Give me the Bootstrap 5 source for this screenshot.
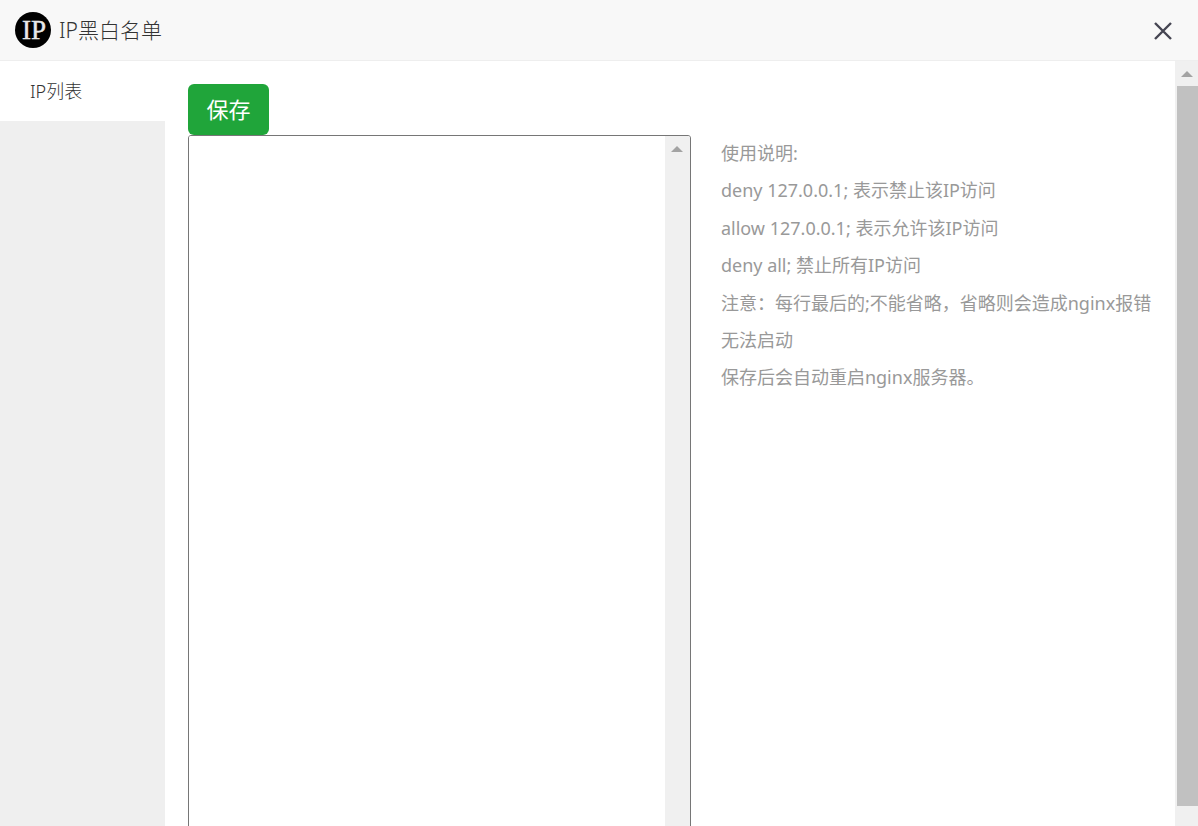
<!DOCTYPE html>
<html lang="zh-CN">
<head>
<meta charset="utf-8">
<meta name="viewport" content="width=device-width, initial-scale=1">
<title>IP黑白名单</title>
<link href="https://cdn.jsdelivr.net/npm/bootstrap@5.3.0/dist/css/bootstrap.min.css" rel="stylesheet">
<style>
  body { font-family: "Noto Sans", "Noto Sans CJK SC", sans-serif; font-size: 18px; color: #333; background: #fff; }
  .dialog-head { height: 61px; padding: 0 24px 0 15px; background: #f8f8f8; border-bottom: 1px solid #eee; }
  .dialog-title { font-size: 21px; line-height: 30px; font-weight: 300; }
  .close-btn { width: 22px; height: 24px; }
  .side { width: 165px; background: #efefef; }
  .side a { height: 60px; padding-left: 30px; color: #333; background: #fff; font-weight: 300; }
  .pane { padding: 23px 23px 0; min-width: 0; }
  .save-btn { min-width: 81px; height: 51px; padding: 0 0 2px; font-size: 22px; line-height: 30px; color: #fff; background: #20a53a; border: 0; border-radius: 6px; }
  .save-btn:hover { color: #fff; background: #1c8f32; }
  .editor-grid { display: grid; grid-template-columns: 7fr 6fr; column-gap: 30px; }
  .editor { border: 1px solid #767676; border-radius: 3px; overflow: hidden; height: 100vh; }
  .editor textarea { border: 0; resize: none; outline: 0; padding: 4px; scrollbar-width: none; }
  .bar { background: #f0f0f0; }
  .editor .bar { width: 25px; }
  .page-bar { width: 23px; padding-left: 2px; }
  .bar svg { display: block; width: 12px; height: 6px; fill: #a3a3a3; }
  .arrow { height: 25px; padding: 10px 6px 0; }
  .page-bar .arrow { padding: 10px 4px 0; }
  .thumb { height: 97.3%; background: #c1c1c1; }
  .track { min-height: 0; }
  .hints { color: #999; line-height: 37px; }
  .hints li:nth-child(even) { margin-bottom: 1px; }
</style>
</head>
<body class="vh-100 overflow-hidden d-flex flex-column">
  <header class="dialog-head d-flex align-items-center flex-shrink-0">
    <svg class="me-2" width="36" height="36" viewBox="0 0 36 36" aria-hidden="true">
      <circle cx="18" cy="18" r="18" fill="#000"/>
      <text x="19" y="27" text-anchor="middle" font-family="Liberation Serif, serif" font-size="27" fill="#e8e8e8" stroke="#e8e8e8" stroke-width=".4">IP</text>
    </svg>
    <h1 class="dialog-title mb-0">IP黑白名单</h1>
    <button type="button" class="close-btn btn p-0 border-0 ms-auto d-flex align-items-end justify-content-center" aria-label="关闭">
      <svg width="18" height="20" viewBox="0 0 18 20" fill="none" stroke="#454552" stroke-width="2.4"><path d="M1 1 17 17M17 1 1 17"/></svg>
    </button>
  </header>
  <div class="d-flex flex-grow-1 overflow-hidden">
    <nav class="side flex-shrink-0">
      <a href="#list" class="d-flex align-items-center text-decoration-none">IP列表</a>
    </nav>
    <main class="pane flex-grow-1 overflow-hidden" id="list">
      <button type="button" class="save-btn btn d-block">保存</button>
      <div class="editor-grid">
        <div class="editor d-flex">
          <textarea class="flex-grow-1" aria-label="IP列表"></textarea>
          <div class="bar flex-shrink-0" aria-hidden="true">
            <div class="arrow"><svg viewBox="0 0 12 6"><path d="M6 0 12 6H0Z"/></svg></div>
          </div>
        </div>
        <ul class="hints list-unstyled mb-0">
          <li>使用说明:</li>
          <li>deny 127.0.0.1; 表示禁止该IP访问</li>
          <li>allow 127.0.0.1; 表示允许该IP访问</li>
          <li>deny all; 禁止所有IP访问</li>
          <li>注意：每行最后的;不能省略，省略则会造成nginx报错无法启动</li>
          <li>保存后会自动重启nginx服务器。</li>
        </ul>
      </div>
    </main>
    <div class="bar page-bar flex-shrink-0 d-flex flex-column" aria-hidden="true">
      <div class="arrow flex-shrink-0"><svg viewBox="0 0 12 6"><path d="M6 0 12 6H0Z"/></svg></div>
      <div class="track flex-grow-1"><div class="thumb"></div></div>
    </div>
  </div>
<script src="https://cdn.jsdelivr.net/npm/bootstrap@5.3.0/dist/js/bootstrap.bundle.min.js"></script>
</body>
</html>
